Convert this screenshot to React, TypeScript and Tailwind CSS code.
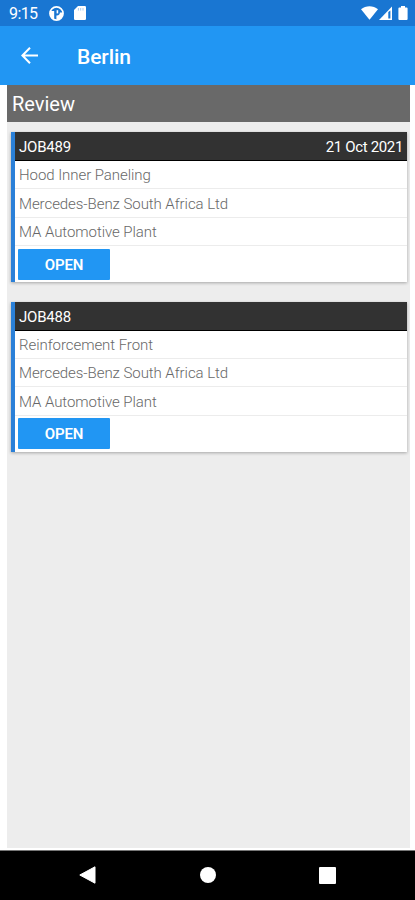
import { clsx } from "clsx";

type Job = {
  id: string;
  date?: string;
  lines: string[];
};

const jobs: Job[] = [
  {
    id: "JOB489",
    date: "21 Oct 2021",
    lines: ["Hood Inner Paneling", "Mercedes-Benz South Africa Ltd", "MA Automotive Plant"],
  },
  {
    id: "JOB488",
    lines: ["Reinforcement Front", "Mercedes-Benz South Africa Ltd", "MA Automotive Plant"],
  },
];

const StatusBar = () => (
  <div className="flex h-[26px] shrink-0 items-center justify-between bg-[#1976d2] pr-[7px] pl-[9px] text-white">
    <div className="flex items-center">
      <span className="w-[40px] pt-[2px] text-[16px] leading-[26px] tracking-[-0.6px] whitespace-nowrap">9:15</span>
      <svg className="h-[15px] w-[15px]" viewBox="0 0 15 15">
        <circle cx="7.5" cy="7.5" r="6.6" fill="none" stroke="#fff" strokeWidth="1.6" />
        <path d="M1.5 5H5.2V13.5A6.3 6.3 0 0 1 1.5 5Z" fill="#fff" />
        <path d="M7.4 13.8V9.4C10 9.6 11 8 10.9 6.4H14V8C13.6 11.5 11 13.9 7.4 13.8Z" fill="#fff" />
        <path d="M7.6 4.2H9.2V7.4H7.6Z" fill="#fff" />
      </svg>
      <svg className="ml-[10px] h-[14px] w-[12px]" viewBox="0 0 12 14">
        <path d="M4 0H10.8A1.2 1.2 0 0 1 12 1.2V12.8A1.2 1.2 0 0 1 10.8 14H1.2A1.2 1.2 0 0 1 0 12.8V4Z" fill="#fff" />
        <path d="M4.4 2V4.6M6.7 2V4.6M9 2V4.6" stroke="#a9cdf0" strokeWidth="1" />
      </svg>
    </div>
    <div className="flex items-center">
      <svg className="h-[14px] w-[17px]" viewBox="0 0 17 14">
        <path d="M0 3.2C4.8-.9 12.2-.9 17 3.2L8.5 13.8Z" fill="#fff" />
      </svg>
      <svg className="ml-px h-[14px] w-[13px]" viewBox="0 0 13 14">
        <path d="M0 14L13 .5V14Z" fill="#fff" />
        <path d="M9.3 6V12.4H11.4V4.5Z" fill="#1976d2" />
      </svg>
      <svg className="ml-[6px] h-[14px] w-[10px]" viewBox="0 0 10 14">
        <path d="M3 0H7V1.5H8.6Q9.6 1.5 9.6 2.5V13Q9.6 14 8.6 14H1.4Q.4 14 .4 13V2.5Q.4 1.5 1.4 1.5H3Z" fill="#fff" />
      </svg>
    </div>
  </div>
);

const AppBar = () => (
  <header className="flex h-[59px] shrink-0 items-center bg-[#2196f3] pl-[21px] text-white">
    <button aria-label="Back" className="-mt-px">
      <svg className="h-[17px] w-[17px]" viewBox="0 0 17 17" fill="none" stroke="#fff" strokeWidth="2">
        <path d="M17 8.5H1.6M9 .8L1.4 8.5L9 16.2" />
      </svg>
    </button>
    <h1 className="ml-[39px] pt-[4px] text-[21px] font-medium tracking-[-0.1px]">Berlin</h1>
  </header>
);

const JobCard = ({ job, className }: { job: Job; className?: string }) => (
  <div
    className={clsx(
      "h-[150px] border-l-4 border-[#2a80d8] bg-white shadow-[0_1px_3px_rgba(0,0,0,0.3)]",
      className
    )}
  >
    <div className="flex h-[29px] items-center justify-between border-b border-black bg-[#323232] pt-[3px] pr-1 pl-1 text-[15px] text-white">
      <span className="tracking-[-0.2px]">{job.id}</span>
      <span className="tracking-[-0.35px]">{job.date}</span>
    </div>
    {job.lines.map((line) => (
      <div
        key={line}
        className="flex h-[28.4px] items-center border-b border-[#ececec] pt-[2px] pl-1 text-[15px] font-light tracking-[-0.06px] text-[#686868]"
      >
        {line}
      </div>
    ))}
    <button className="mt-[2.5px] ml-[3px] block h-[31px] w-[92px] rounded-[1px] bg-[#2196f3] pt-[2px] text-[15px] font-semibold tracking-[-0.1px] text-white">
      OPEN
    </button>
  </div>
);

const NavBar = () => (
  <nav className="flex h-[50px] shrink-0 items-center justify-between border-t border-[#777] bg-black px-[79px] pb-px">
    <svg className="h-[18px] w-[17px]" viewBox="0 0 17 18">
      <path d="M16 .8V17.2L.8 9Z" fill="#fff" stroke="#fff" strokeWidth="1" strokeLinejoin="round" />
    </svg>
    <div className="h-4 w-4 rounded-full bg-white" />
    <div className="h-[17px] w-[17px] rounded-[1px] bg-white" />
  </nav>
);

export default function App() {
  return (
    <div className="flex h-[900px] w-[415px] flex-col overflow-hidden bg-white font-[Roboto,sans-serif]">
      <StatusBar />
      <AppBar />
      <main className="mr-[5px] mb-[2px] ml-[7px] flex-1 bg-[#ededed]">
        <h2 className="flex h-[37px] items-center bg-[#696969] pt-px pl-[5px] text-[20px] text-white">Review</h2>
        <div className="flex flex-col gap-[19.5px] pt-[10px] pr-[3px] pl-1">
          {jobs.map((job) => (
            <JobCard key={job.id} job={job} />
          ))}
        </div>
      </main>
      <NavBar />
    </div>
  );
}
